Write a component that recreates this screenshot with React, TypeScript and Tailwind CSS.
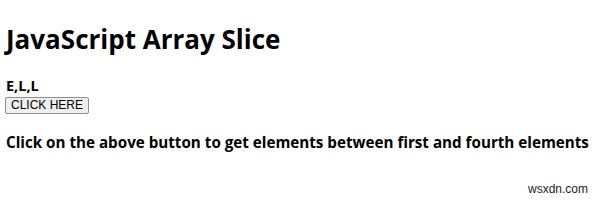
import React, { useState } from "react";

export default function App() {
  const [result, setResult] = useState("E,L,L");

  const handleClick = () => {
    const letters = ["H", "E", "L", "L", "O"];
    setResult(letters.slice(1, 4).join(","));
  };

  return (
    <div className="relative w-[600px] h-[203px] bg-white text-black font-['Open_Sans',sans-serif]">
      <div className="px-[6px] pt-[23px]">
        <h1 className="text-[26px] leading-[32px] font-bold">JavaScript Array Slice</h1>
        <p className="mt-[22px] text-[14.5px] leading-[18px] font-bold">{result}</p>
        <button
          onClick={handleClick}
          className="block mt-[2px] -ml-[1px] h-[17px] px-[5px] border border-[#8f8f8f] rounded-[2px] bg-[#efefef] text-[12px] leading-[15px] font-['Liberation_Sans',sans-serif]"
        >
          CLICK HERE
        </button>
        <p className="mt-[18px] text-[15.2px] leading-[20px] font-bold">
          Click on the above button to get elements between first and fourth elements
        </p>
      </div>
      <span className="absolute right-[12px] bottom-[5px] text-[12px] font-['Liberation_Sans',sans-serif] text-[#222]">
        wsxdn.com
      </span>
    </div>
  );
}
